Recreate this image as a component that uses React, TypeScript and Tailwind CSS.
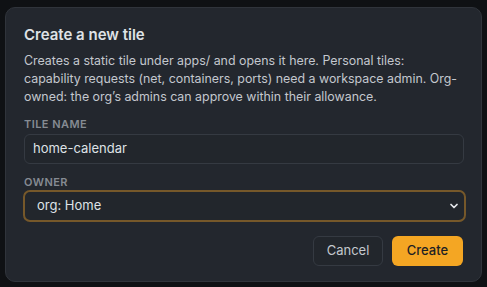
import { ChevronDown } from 'lucide-react';

export default function App() {
  return (
    <div className="w-full h-[287px] bg-[#0f1114] pt-[7px] pl-[5px] font-['Inter',sans-serif]">
      <div className="w-[477px] h-[275px] rounded-[10px] border border-[#30343b] bg-[#23272e] px-[18px] pt-[17px]">
        <h2 className="text-[15px] font-semibold leading-[20px] text-[#dfe2e6]">Create a new tile</h2>
        <p className="mt-[7px] text-[12.4px] leading-[18px] text-[#c4c8ce]">
          Creates a static tile under apps/ and opens it here. Personal tiles: capability requests (net, containers, ports) need a workspace admin. Org-owned: the org’s admins can approve within their allowance.
        </p>

        <label className="mt-[11px] block text-[11px] font-semibold leading-[14px] tracking-[0.04em] text-[#868b93]">
          TILE NAME
        </label>
        <div className="mt-[3px] flex items-center w-[440px] h-[30px] rounded-[6px] border border-[#353a42] bg-[#22262c] px-2">
          <input
            defaultValue="home-calendar"
            className="w-full bg-transparent text-[13px] text-[#dfe2e6] outline-none"
          />
        </div>

        <label className="mt-[11px] block text-[11px] font-semibold leading-[14px] tracking-[0.04em] text-[#868b93]">
          OWNER
        </label>
        <div className="relative mt-[1px] flex items-center w-[443px] h-[32px] -ml-[1px] rounded-[7px] border-2 border-[#76582a] bg-[#22262c] pl-3 pr-6">
          <select
            defaultValue="org"
            className="w-full appearance-none bg-transparent text-[13px] text-[#dfe2e6] outline-none"
          >
            <option value="org">org: Home</option>
            <option value="me">personal</option>
          </select>
          <ChevronDown className="pointer-events-none absolute right-[4px] top-[8px] w-[12px] h-[12px] text-[#e5e7eb]" strokeWidth={3.5} />
        </div>

        <div className="mt-[14px] flex justify-end gap-[9px]">
          <button className="w-[70px] h-[30px] rounded-[6px] border border-[#353a42] bg-[#22262c] text-[13px] text-[#c4c8ce]">
            Cancel
          </button>
          <button className="w-[71px] h-[30px] rounded-[6px] bg-[#f4a623] text-[13px] font-medium text-[#1d1f23]">
            Create
          </button>
        </div>
      </div>
    </div>
  );
}
